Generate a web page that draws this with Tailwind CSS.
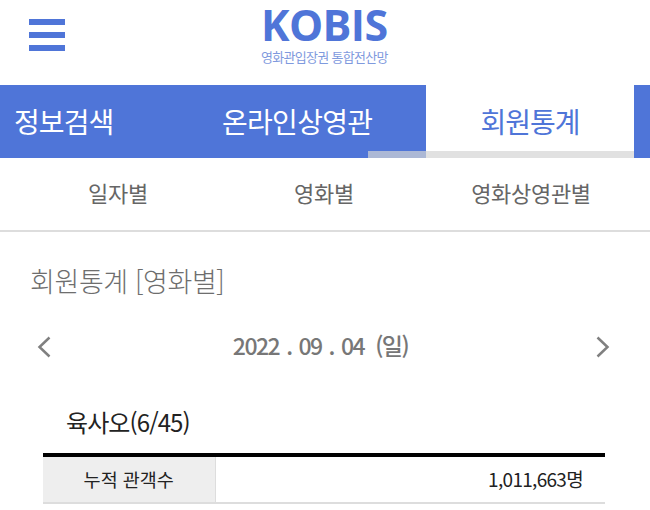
<!DOCTYPE html>
<html lang="ko">
<head>
  <meta charset="UTF-8"/>
  <title>KOBIS 회원통계</title>
  <script src="https://cdn.jsdelivr.net/npm/@tailwindcss/browser@4"></script>
</head>
<body class="bg-white w-[650px] h-[510px] overflow-hidden font-['Noto_Sans_CJK_KR',sans-serif]">

  <!-- Header -->
  <header class="h-[85px] flex">
    <div class="w-[130px] pl-[29px] pt-[19px] flex flex-col gap-[7px]">
      <span class="block w-[36px] h-[6px] bg-[#4f75d8]"></span>
      <span class="block w-[36px] h-[6px] bg-[#4f75d8]"></span>
      <span class="block w-[36px] h-[6px] bg-[#4f75d8]"></span>
    </div>
    <div class="flex-1 pl-[131px]">
      <div class="text-[43px] leading-[48px] pt-[1px] font-bold tracking-[-0.6px] text-[#4f75d8] font-['Open_Sans',sans-serif]">KOBIS</div>
      <div class="text-[13px] leading-[16px] tracking-[-0.7px] text-[#7f9ade]">영화관입장권 통합전산망</div>
    </div>
  </header>

  <!-- Main tabs -->
  <nav class="h-[73px] flex bg-[#4f75d8] text-[28px] leading-[40px] relative">
    <div class="w-[128px] pl-[14px] pb-[2px] flex items-center text-white tracking-[-0.9px]">정보검색</div>
    <div class="w-[298px] pl-[94px] pb-[2px] flex items-center text-white tracking-[-0.7px]">온라인상영관</div>
    <div class="w-[208px] pb-[2px] bg-white flex items-center justify-center text-[#4f75d8] tracking-[-1px]">회원통계</div>
    <div class="absolute left-[368px] bottom-0 w-[266px] h-[7px] bg-[#d4d4d4]/70"></div>
  </nav>

  <!-- Sub tabs -->
  <div class="h-[74px] pb-[3px] flex items-center border-b-2 border-[#dddddd] text-[22px] text-[#666666] tracking-[-0.3px]">
    <div class="w-[236px] text-center">일자별</div>
    <div class="w-[176px] text-center">영화별</div>
    <div class="flex-1 text-center">영화상영관별</div>
  </div>

  <!-- Title -->
  <h2 class="pl-[30px] pt-[29px] text-[27px] leading-[40px] text-[#6e6e6e] tracking-[-0.4px] font-light">회원통계 [영화별]</h2>

  <!-- Date -->
  <div class="mt-[24px] h-[40px] pl-[37px] pr-[40px] flex items-center justify-between text-[#777777]">
    <svg class="w-[14px] h-[22px] mt-[4px]" viewBox="0 0 14 22" fill="none" stroke="#808080" stroke-width="2.5"><path d="M12.5 1.5 2.5 11l10 9.5"/></svg>
    <div class="text-[23px] leading-[40px] font-medium tracking-[-1.5px] [word-spacing:2px] flex mr-[6px]">
      <span>2022 . 09 . 04</span>
      <span class="ml-[11px]">(일)</span>
    </div>
    <svg class="w-[14px] h-[22px] mt-[4px]" viewBox="0 0 14 22" fill="none" stroke="#808080" stroke-width="2.5"><path d="M1.5 1.5 11.5 11l-10 9.5"/></svg>
  </div>

  <!-- Movie -->
  <h3 class="pl-[66px] mt-[39px] text-[24px] leading-[36px] text-[#222222] tracking-[-0.9px] font-normal">육사오(6/45)</h3>

  <table class="ml-[43px] mt-[13px] w-[562px] border-t-[4px] border-black border-collapse">
    <tbody>
      <tr class="h-[48px] border-b-2 border-[#dddddd] text-[18.5px] text-[#222222]">
        <th class="w-[172px] bg-[#eeeeee] border-r border-[#dddddd] font-normal">누적 관객수</th>
        <td class="text-right pr-[22px] text-[19px] tracking-[-0.7px]">1,011,663명</td>
      </tr>
    </tbody>
  </table>

</body>
</html>
